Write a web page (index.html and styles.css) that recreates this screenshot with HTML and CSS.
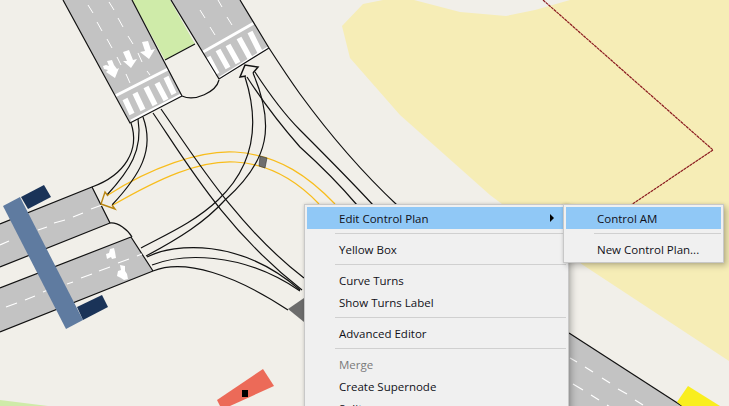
FILE: index.html
```html
<!DOCTYPE html>
<html lang="en">
<head>
<meta charset="utf-8">
<title>Control Plan</title>
<link rel="stylesheet" href="styles.css">
</head>
<body>
<div class="stage">
<svg class="map" width="729" height="406" viewBox="0 0 729 406" xmlns="http://www.w3.org/2000/svg">
  <defs>
    <pattern id="dots" x="0" y="0" width="2" height="2" patternUnits="userSpaceOnUse">
      <rect x="0" y="0" width="2" height="2" fill="#e9452f"/>
      <rect x="0" y="0" width="1" height="1" fill="#fbd9cf"/>
    </pattern>
  </defs>
  <polygon class="land" points="342,26 363,4 383,0 414,0 460,12 506,16 535,10 570,0 729,0 729,361 583,265 490,195 400,115 350,58"/>
  <polyline class="boundary" points="543,0 713,150 631,205"/>

  <polygon class="green" points="132,0 170,0 195,44 165,60"/>
  <polygon class="road" points="63,0 132,0 182,95 130,122"/>
  <polygon class="road" points="170,0 240,0 269,48 219,79"/>
  <path class="white-thick" d="M115,96L168,69M203,52L254,23"/>
  <path class="white-band" d="M131,121L181,95M220,78L268,48"/>
  <path class="stripes" d="M125,99L132,114M135,93L143,110M146,87L155,105M157,83L166,100M166,77L174,94M208,57L217,74M218,50L228,68M228,45L238,63M239,38L250,58M250,32L260,52"/>
  <path class="edge" d="M63,0L130,123L182,96M132,0L182,96M171,0L219,79L269,48M240,0L269,48M165,60L195,44"/>
  <path class="island" d="M182,96C195,102 216,92 219,80"/>
  <path class="dash" d="M88,5L93,13M97,22L102,31M107,39L112,48M109,2L114,10M118,18L123,27M128,36L133,44M117,57L121,65M138,53L142,62M126,74L130,83M147,71L150,75M200,10L205,18M210,27L215,35M218,0L222,7M227,17L232,25"/>
  <path class="arrow" d="M107,61L112,60L114,65L117,69L119,68L115,78L106,72L108,70L104,69L103,66L106,65L109,66Z"/>
  <path class="arrow" d="M123,52L129,50L133,60L137,59L131,68L123,61L127,61Z"/>
  <path class="arrow" d="M142,42L148,41L151,50L155,49L149,59L140,52L145,51Z"/>

  <polygon class="road" points="0,224 92,187 110,223 0,267"/>
  <polygon class="road" points="0,288 131,237 153,271 0,332"/>
  <path class="edge" d="M0,224L92,187L110,223L0,267M0,288L131,237M0,332L153,271M131,237L153,271"/>
  <path class="island" d="M110,223C118,222 128,230 132,237"/>
  <path class="lane" d="M0,245L9,241M38,230L47,227M54,223L65,220M73,217L83,213M91,209L102,205M6,307L17,303M25,300L35,296M43,292L48,290M67,284L73,282M81,278L92,274M99,271L110,267M118,263L129,259M137,256L142,254"/>
  <path class="arrow" d="M110,249L114,248L115,252L116,258L112,259L111,257L107,259L106,254L109,253Z"/>
  <path class="arrow" d="M120,265L125,266L125,271L127,274L128,279L124,280L121,278L117,276L118,271L121,270Z"/>

  <polygon class="deck" points="3,206 20,197 83,320 66,329"/>
  <polygon class="navy" points="21,197 44,185 51,197 28,209"/>
  <polygon class="navy" points="77,307 102,295 108,307 83,320"/>

  <path class="amber" d="M108,195C150,168 200,150 235,152C280,155 310,178 335,204"/>
  <path class="amber" d="M113,205C160,178 200,160 235,162C270,164 298,182 319,204"/>
  <polygon class="signal" points="260,156 267,158 265,168 259,166"/>

  <path class="turn" d="M131,123C140,150 125,175 92,187"/>
  <path class="turn" d="M138,119C143,150 130,170 107,195"/>
  <path class="turn" d="M143,117C155,150 140,175 112,205"/>
  <path class="amber-head" d="M108,196L105,192L101,204L115,209L112,205"/>
  <path class="turn" d="M153,113C185,160 225,230 302,290"/>
  <path class="turn" d="M161,109C190,150 235,225 304,278"/>
  <path class="turn" d="M245,77C262,130 250,170 218,200C195,222 165,235 141,248"/>
  <path class="turn" d="M253,73C275,125 270,160 225,200C205,222 180,238 146,256"/>
  <path class="turn" d="M247,77C265,105 285,130 300,147C320,165 340,185 357,205"/>
  <path class="turn" d="M255,72C270,95 285,115 300,130C325,155 350,180 373,205"/>
  <path class="turn" d="M269,48C280,65 290,80 300,94C330,135 365,175 397,205"/>
  <path class="turn" d="M147,257C175,243 240,238 300,290"/>
  <path class="turn" d="M152,265C180,254 240,250 300,291"/>
  <path class="turn" d="M153,271C185,258 235,275 288,310"/>
  <path class="head" d="M253,73L258,67L245,65L240,77L246,76"/>
  <polygon class="junction" points="288,309 304,298 304,322"/>

  <polygon class="hatch" points="217,400 263,369 274,386 230,406 220,406"/>
  <rect class="stop" x="242" y="390" width="6" height="7"/>
  <polygon class="green" points="0,400 48,406 0,406"/>

  <polygon class="road" points="569,333 682,406 569,406"/>
  <path class="edge" d="M569,333L682,406"/>
  <path class="lane" d="M570,358L577,362M585,367L593,372M602,378L610,383M618,389L627,394M635,400L643,405M573,384L583,390M591,395L599,400M607,405L610,407"/>
  <polygon class="yellow" points="688,386 720,406 682,406 677,402"/>
</svg>

<div class="menu menu-main">
  <div class="item active">Edit Control Plan<span class="caret"></span></div>
  <div class="sep"></div>
  <div class="item">Yellow Box</div>
  <div class="sep"></div>
  <div class="item">Curve Turns</div>
  <div class="item">Show Turns Label</div>
  <div class="sep"></div>
  <div class="item">Advanced Editor</div>
  <div class="sep"></div>
  <div class="item disabled">Merge</div>
  <div class="item">Create Supernode</div>
  <div class="item">Split</div>
</div>

<div class="menu menu-sub">
  <div class="item active">Control AM</div>
  <div class="sep"></div>
  <div class="item">New Control Plan...</div>
</div>
</div>
</body>
</html>
```
FILE: styles.css
```css
html, body { margin: 0; padding: 0; background: #f1efe9; }
.stage { position: relative; width: 729px; height: 406px; overflow: hidden; background: #f1efe9; }
.map { display: block; }
.land { fill: #f6edb6; }
.boundary { fill: none; stroke: #8b1a1f; stroke-width: 1.2; stroke-dasharray: 3 0.6; }
.green { fill: #cfeba9; }
.road { fill: #c3c3c3; }
.edge { fill: none; stroke: #111; stroke-width: 1.2; }
.island { fill: #f1efe9; stroke: #111; stroke-width: 1.2; }
.white-thick { fill: none; stroke: #fff; stroke-width: 3; }
.white-band { fill: none; stroke: #fff; stroke-width: 3; }
.stripes { fill: none; stroke: #fff; stroke-width: 5.5; }
.dash { fill: none; stroke: #fff; stroke-width: 1; }
.lane { fill: none; stroke: #fff; stroke-width: 1.2; }
.arrow { fill: #fff; }
.deck { fill: #5f7ba0; }
.navy { fill: #1a3358; }
.amber { fill: none; stroke: #f8bd1c; stroke-width: 1.2; }
.amber-head { fill: #f1efe9; stroke: #b98510; stroke-width: 1.4; }
.signal { fill: #6e6e6e; stroke: #333; stroke-width: 0.6; }
.turn { fill: none; stroke: #111; stroke-width: 1.2; }
.head { fill: #f1efe9; stroke: #111; stroke-width: 1.5; }
.junction { fill: #6c6c6c; }
.hatch { fill: #ec6a58; }
.stop { fill: #000; }
.yellow { fill: #f9ee1f; }

.menu {
  position: absolute;
  box-sizing: border-box;
  background: #f0f0f0;
  border: 1px solid #c8c8c8;
  padding: 2px;
  box-shadow: 3px 3px 6px rgba(0, 0, 0, 0.22), 0 0 3px rgba(0, 0, 0, 0.12);
  font-family: "Open Sans", "Noto Sans", sans-serif;
  font-size: 11.5px;
  color: #101018;
}
.menu-main { left: 304px; top: 204px; width: 265px; }
.menu-sub { left: 563px; top: 204px; width: 161px; }
.item { position: relative; height: 22px; line-height: 23px; padding-left: 32px; white-space: nowrap; }
.menu-sub .item { padding-left: 31px; }
.active { background: #90c8f6; }
.disabled { color: #7a7a7a; }
.sep { height: 9px; box-sizing: border-box; margin-left: 28px; padding-top: 4px; }
.sep::before { content: ""; display: block; height: 1px; background: #d0d0d0; }
.caret {
  position: absolute;
  right: 12px;
  top: 7px;
  width: 0;
  height: 0;
  border-style: solid;
  border-width: 4px 0 4px 4px;
  border-color: transparent transparent transparent #000;
}
```
